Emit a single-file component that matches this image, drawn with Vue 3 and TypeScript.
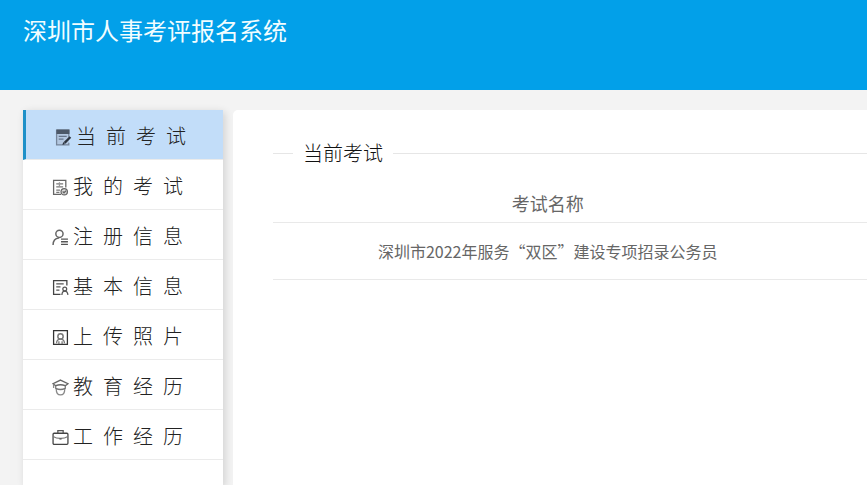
<script setup lang="ts">
import { ref } from 'vue'

interface MenuItem {
  key: string
  label: string
}

const menu: MenuItem[] = [
  { key: 'current', label: '当前考试' },
  { key: 'mine', label: '我的考试' },
  { key: 'register', label: '注册信息' },
  { key: 'basic', label: '基本信息' },
  { key: 'photo', label: '上传照片' },
  { key: 'education', label: '教育经历' },
  { key: 'work', label: '工作经历' },
]

const active = ref<string>('current')
const exams: string[] = ['深圳市2022年服务“双区”建设专项招录公务员']
</script>

<template>
  <div class="page">
    <header class="header">
      <h1 class="title">深圳市人事考评报名系统</h1>
    </header>
    <div class="body">
      <nav class="sidebar">
        <a
          v-for="item in menu"
          :key="item.key"
          :href="'#' + item.key"
          class="item"
          :class="{ active: item.key === active }"
          @click="active = item.key"
        >
          <svg class="icon" viewBox="0 0 16 16" fill="none" stroke="currentColor" stroke-width="1.2" aria-hidden="true">
            <template v-if="item.key === 'current'">
              <path d="M13 8V1H1.500V15H13V13" stroke="#76859a" fill="#b3c7e0" />
              <path d="M2 1H13V4H2Z" fill="#4c5868" stroke="#4c5868" />
              <path d="M3.500 7H11M3.500 9.500H8" stroke="#66758a" />
              <path d="M14.500 7.500L9 13" stroke="#2c343f" stroke-width="2.200" />
              <path d="M7 15L7.700 12.300L9.500 14.100Z" fill="#2c343f" stroke="none" />
            </template>
            <template v-else-if="item.key === 'mine'">
              <path d="M13 8V1.200H1.500V14.500H8.500" stroke="#666" />
              <path d="M4 4.500H10.500M4 7.500H10.500M4 10.500H7.500M4 12.500H7" stroke="#777" />
              <path d="M7 3V7" stroke="#999" />
              <circle cx="11.500" cy="12" r="3" fill="#ddd" stroke="#666" />
              <path d="M10 11.700L11.300 13L13.200 11" stroke="#666" />
            </template>
            <template v-else-if="item.key === 'register'">
              <circle cx="7" cy="4.500" r="3.400" stroke="#666" stroke-width="1.400" />
              <path d="M1 15C1 11 3 8.700 6.500 8.400" stroke="#666" stroke-width="1.400" />
              <path d="M8.500 9.500H15M8.500 12H15M8.500 14.500H15" stroke="#555" />
            </template>
            <template v-else-if="item.key === 'basic'">
              <path d="M14 6V1.500H1.500V14.500H8" stroke="#444" />
              <path d="M4 4.500H11M4 7.500H8M4 10.500H7" stroke="#555" />
              <circle cx="12" cy="9.500" r="1.800" stroke="#555" />
              <path d="M9.300 15C9.500 12.500 10.500 11.500 12 11.500S14.700 12.500 15 15" stroke="#555" />
            </template>
            <template v-else-if="item.key === 'photo'">
              <path d="M1.500 1.500H14.500V14.500H1.500Z" stroke="#333" />
              <circle cx="8" cy="7" r="2.500" stroke="#777" stroke-width="1.400" />
              <path d="M4.300 13.500C4.300 10.700 6 9.500 8 9.500S11.700 10.700 11.700 13.500M6.500 11.500V14M9.500 11.500V14" stroke="#777" />
            </template>
            <template v-else-if="item.key === 'education'">
              <path d="M8 1L15 4.500L12.500 6.300C10 5.300 6 5.300 3.500 6.300L1 4.500Z" stroke="#666" />
              <path d="M3.500 6.300V8.800C6 10 10 10 12.500 8.800V6.300" stroke="#777" />
              <path d="M4 9.300C4 13 5 15 8 15S12 13 12 9.300M1.500 5V8.500" stroke="#888" />
            </template>
            <template v-else>
              <rect x="1" y="4" width="14" height="10.500" rx="1" stroke="#444" />
              <path d="M5.500 4V1.500H10.500V4" stroke="#555" />
              <path d="M1 7C5 9.500 11 9.500 15 7" stroke="#777" />
              <path d="M7 8.500H9V10H7Z" fill="#666" stroke="none" />
            </template>
          </svg>
          <span class="label">{{ item.label }}</span>
        </a>
      </nav>
      <main class="panel">
        <div class="heading">
          <h2 class="heading-text">当前考试</h2>
        </div>
        <table class="exams">
          <thead>
            <tr><th scope="col" class="name">考试名称</th><td></td></tr>
          </thead>
          <tbody>
            <tr v-for="exam in exams" :key="exam"><td class="name">{{ exam }}</td><td></td></tr>
          </tbody>
        </table>
      </main>
    </div>
  </div>
</template>

<style>
body {
  background: #f3f3f3;
}
</style>

<style scoped>
.page {
  display: flex;
  flex-direction: column;
  min-height: 100vh;
  font-family: "Noto Sans CJK SC", sans-serif;
  font-weight: 300;
  color: #222;
}
.header {
  box-sizing: border-box;
  height: 90px;
  padding: 12px 23px;
  background: #02a0e9;
}
.title {
  margin: 0;
  font-size: 24px;
  line-height: 36px;
  font-weight: 400;
  color: #f2fdff;
}
.body {
  flex: 1;
  display: flex;
  gap: 10px;
  padding: 20px 0 0 23px;
}
.sidebar {
  flex: 0 0 200px;
  background: #fff;
  box-shadow: 2px 2px 8px rgba(0, 0, 0, 0.14);
}
.item {
  box-sizing: border-box;
  display: flex;
  align-items: center;
  gap: 4px;
  height: 50px;
  padding: 2px 0 0 29px;
  border-bottom: 1px solid #ebebeb;
  color: #222;
  text-decoration: none;
}
.item.active {
  border-left: 3px solid #1e90c8;
  background: #c2ddf9;
}
.icon {
  flex: none;
  width: 17px;
  height: 17px;
  margin-top: 3px;
}
.label {
  font-size: 20px;
  line-height: 30px;
  letter-spacing: 10px;
  white-space: nowrap;
}
.panel {
  flex: 1;
  min-width: 0;
  padding: 28px 0 0 40px;
  background: #fff;
  border-radius: 5px 0 0 0;
}
.heading {
  display: flex;
  align-items: center;
  gap: 10px;
}
.heading::before,
.heading::after {
  content: "";
  height: 1px;
  background: #e6e6e6;
}
.heading::before {
  width: 20px;
}
.heading::after {
  flex: 1;
}
.heading-text {
  margin: 0;
  font-size: 20px;
  line-height: 30px;
  font-weight: 300;
  color: #111;
}
.exams {
  width: 100%;
  margin-top: 16px;
  border-collapse: collapse;
  table-layout: fixed;
  color: #666;
}
.exams th,
.exams td {
  padding: 0;
  border-bottom: 1px solid #e9e9e9;
  font-weight: 400;
}
.exams .name {
  width: 92.5%;
  text-align: center;
}
.exams th {
  height: 38px;
  font-size: 18px;
  line-height: 26px;
}
.exams tbody td {
  height: 56px;
  font-size: 16px;
  line-height: 24px;
}
</style>
